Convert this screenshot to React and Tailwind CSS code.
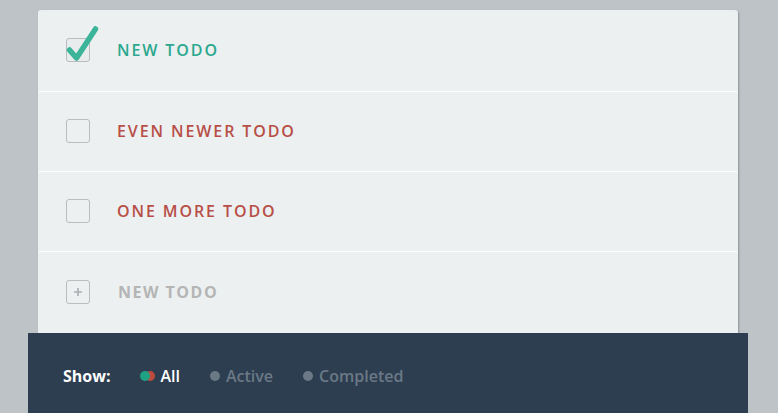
import React from "react";

const font = { fontFamily: '"Open Sans", "Noto Sans", sans-serif' };

function Check() {
  return (
    <div className="relative w-6 h-6 shrink-0">
      <div className="absolute inset-0 rounded-[3px] border border-[#b9bdbf] bg-[#e9eced]" />
      <svg className="absolute left-[0px] top-[-12px]" width="34" height="36" viewBox="0 0 34 36">
        <path d="M3.5 24 L10.5 32 L29.5 3" fill="none" stroke="#3cb499" strokeWidth="5.5" strokeLinecap="round" strokeLinejoin="round" />
      </svg>
    </div>
  );
}

function Box({ plus }) {
  return (
    <div className="w-6 h-6 shrink-0 rounded-[3px] border border-[#b9bdbf] flex items-center justify-center">
      {plus && (
        <svg width="10" height="10" viewBox="0 0 10 10">
          <path d="M5 1 V9 M1 5 H9" stroke="#a9adb0" strokeWidth="1.6" />
        </svg>
      )}
    </div>
  );
}

function Row({ children, label, color, bold, h }) {
  return (
    <div className={`${h} flex items-center pl-[28px] pb-[2px] border-b border-[#fafbfb] last:border-b-0`}>
      {children}
      <span
        className={`text-[16px] ${bold ? "font-bold ml-[28px] tracking-[1.5px]" : "font-semibold ml-[27px] tracking-[1.9px]"}`}
        style={{ ...font, color }}
      >
        {label}
      </span>
    </div>
  );
}

export default function App() {
  return (
    <div className="w-[778px] h-[413px] bg-[#bec3c7] overflow-hidden pt-[10px]" style={font}>
      <div className="ml-[38px] w-[700px] bg-[#ecf0f1] rounded-t-[3px] shadow-[1px_1px_2px_rgba(0,0,0,0.25)]">
        <Row h="h-[82px]" label="NEW TODO" color="#2ba88d"><Check /></Row>
        <Row h="h-[80px]" label="EVEN NEWER TODO" color="#b84f47"><Box /></Row>
        <Row h="h-[80px]" label="ONE MORE TODO" color="#b84f47"><Box /></Row>
        <Row h="h-[81px]" label="NEW TODO" color="#b5b5b5" bold><Box plus /></Row>
      </div>
      <div className="ml-[28px] w-[720px] h-[86px] bg-[#2d3e50] flex items-center pl-[35px] text-[16px]">
        <span className="font-bold text-white">Show:</span>
        <div className="ml-[29px] flex items-center">
          <span className="relative w-[16px] h-[10px]">
            <span className="absolute left-[5px] top-0 w-[10px] h-[10px] rounded-full bg-[#bf4a3e]" />
            <span className="absolute left-0 top-0 w-[10px] h-[10px] rounded-full bg-[#1fa283]" />
          </span>
          <span className="ml-[5px] font-semibold text-white">All</span>
        </div>
        <div className="ml-[30px] flex items-center">
          <span className="w-[10px] h-[10px] rounded-full bg-[#6b7886]" />
          <span className="ml-[6px] font-semibold text-[#6b7886]">Active</span>
        </div>
        <div className="ml-[30px] flex items-center">
          <span className="w-[10px] h-[10px] rounded-full bg-[#6b7886]" />
          <span className="ml-[6px] font-semibold text-[#6b7886]">Completed</span>
        </div>
      </div>
    </div>
  );
}
